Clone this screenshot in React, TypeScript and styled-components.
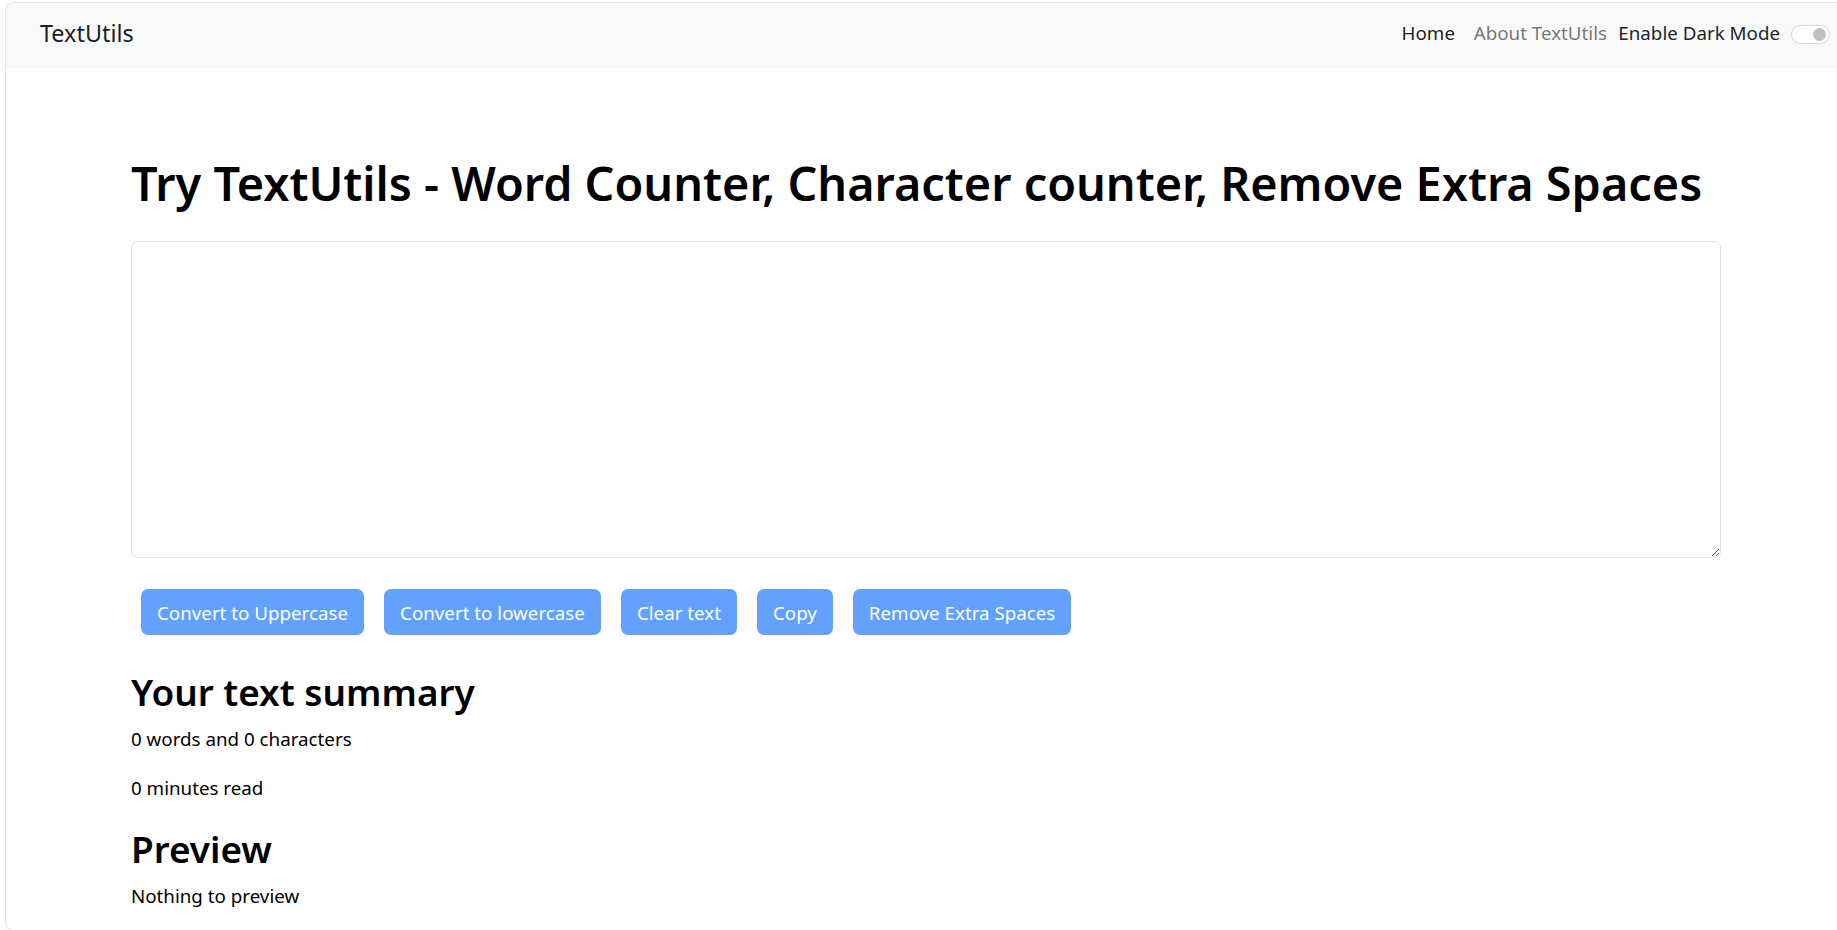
import React, { useState } from 'react';
import styled, { createGlobalStyle } from 'styled-components';

const GlobalStyle = createGlobalStyle`
  html, body {
    margin: 0;
    padding: 0;
    background: #ffffff;
  }
  body {
    font-family: "Noto Sans", "Open Sans", sans-serif;
    font-size: 18.75px;
    line-height: 1.5;
    color: #000000;
  }
  * {
    box-sizing: border-box;
  }
`;

const Frame = styled.div`
  margin: 2px 0 0 5px;
  height: 929px;
  border: 1px solid #e4e4e4;
  border-right: none;
  border-radius: 8px 0 0 8px;
  overflow: hidden;
  background: #ffffff;
`;

const Navbar = styled.nav`
  display: flex;
  align-items: center;
  height: 65px;
  padding: 0 7px 4px 34px;
  background: #f8f9fa;
`;

const Brand = styled.a`
  font-size: 23.4px;
  color: rgba(0, 0, 0, 0.9);
  text-decoration: none;
`;

const NavRight = styled.div`
  display: flex;
  align-items: center;
  margin-left: auto;
`;

const NavLink = styled.a<{ $active?: boolean }>`
  padding: 0 9.4px;
  font-size: 18.75px;
  color: ${(p) => (p.$active ? 'rgba(0, 0, 0, 0.9)' : 'rgba(0, 0, 0, 0.55)')};
  text-decoration: none;
  cursor: pointer;
`;

const SwitchLabel = styled.label`
  display: flex;
  align-items: center;
  gap: 11px;
  margin-left: 2px;
  font-size: 18.75px;
  color: #212529;
  cursor: pointer;
`;

const SwitchTrack = styled.span<{ $on: boolean }>`
  position: relative;
  display: inline-block;
  width: 39px;
  height: 19px;
  margin-top: 2px;
  border: 1px solid #d6d6d6;
  border-radius: 10px;
  background: ${(p) => (p.$on ? '#0d6efd' : '#ffffff')};

  &::after {
    content: '';
    position: absolute;
    top: 2px;
    right: 3px;
    width: 13px;
    height: 13px;
    border-radius: 50%;
    background: ${(p) => (p.$on ? '#ffffff' : '#bfbfbf')};
  }
`;

const Main = styled.main`
  width: 1590px;
  margin-left: 125px;
  padding-top: 87px;
`;

const Title = styled.h1`
  margin: 0 0 30px;
  font-size: 46.8px;
  font-weight: 600;
  line-height: 1.2;
`;

const TextBox = styled.textarea`
  display: block;
  width: 100%;
  height: 317px;
  padding: 7px 14px;
  border: 1px solid #dee2e6;
  border-radius: 7px;
  font-family: inherit;
  font-size: 18.75px;
  color: #212529;
  outline: none;
`;

const ButtonRow = styled.div`
  display: flex;
  gap: 20px;
  margin: 31px 0 0 10px;
`;

const ActionButton = styled.button`
  height: 46px;
  padding: 0 15px;
  border: 1px solid transparent;
  border-radius: 7px;
  background: #62a1fe;
  color: #ffffff;
  font-family: inherit;
  font-size: 18.75px;
  cursor: default;
`;

const SectionHeading = styled.h2<{ $gap: number }>`
  margin: ${(p) => p.$gap}px 0 10px;
  font-size: 36.9px;
  font-weight: 600;
  line-height: 45px;
`;

const Line = styled.p<{ $gap?: number }>`
  margin: ${(p) => p.$gap ?? 0}px 0 0;
  font-size: 18.75px;
`;

const buttons = [
  'Convert to Uppercase',
  'Convert to lowercase',
  'Clear text',
  'Copy',
  'Remove Extra Spaces',
];

export default function App() {
  const [text, setText] = useState('');
  const [dark, setDark] = useState(false);

  const words = text.split(/\s+/).filter((w) => w.length > 0).length;

  return (
    <>
      <GlobalStyle />
      <Frame>
        <Navbar>
          <Brand href="#">TextUtils</Brand>
          <NavRight>
            <NavLink $active>Home</NavLink>
            <NavLink>About TextUtils</NavLink>
            <SwitchLabel onClick={() => setDark(!dark)}>
              Enable Dark Mode
              <SwitchTrack $on={dark} />
            </SwitchLabel>
          </NavRight>
        </Navbar>

        <Main>
          <Title>Try TextUtils - Word Counter, Character counter, Remove Extra Spaces</Title>
          <TextBox value={text} onChange={(e) => setText(e.target.value)} />
          <ButtonRow>
            {buttons.map((b) => (
              <ActionButton key={b} disabled={text.length === 0}>
                {b}
              </ActionButton>
            ))}
          </ButtonRow>
          <SectionHeading $gap={35}>Your text summary</SectionHeading>
          <Line>
            {words} words and {text.length} characters
          </Line>
          <Line $gap={21}>{0.008 * words} minutes read</Line>
          <SectionHeading $gap={25}>Preview</SectionHeading>
          <Line $gap={2}>{text.length > 0 ? text : 'Nothing to preview'}</Line>
        </Main>
      </Frame>
    </>
  );
}
